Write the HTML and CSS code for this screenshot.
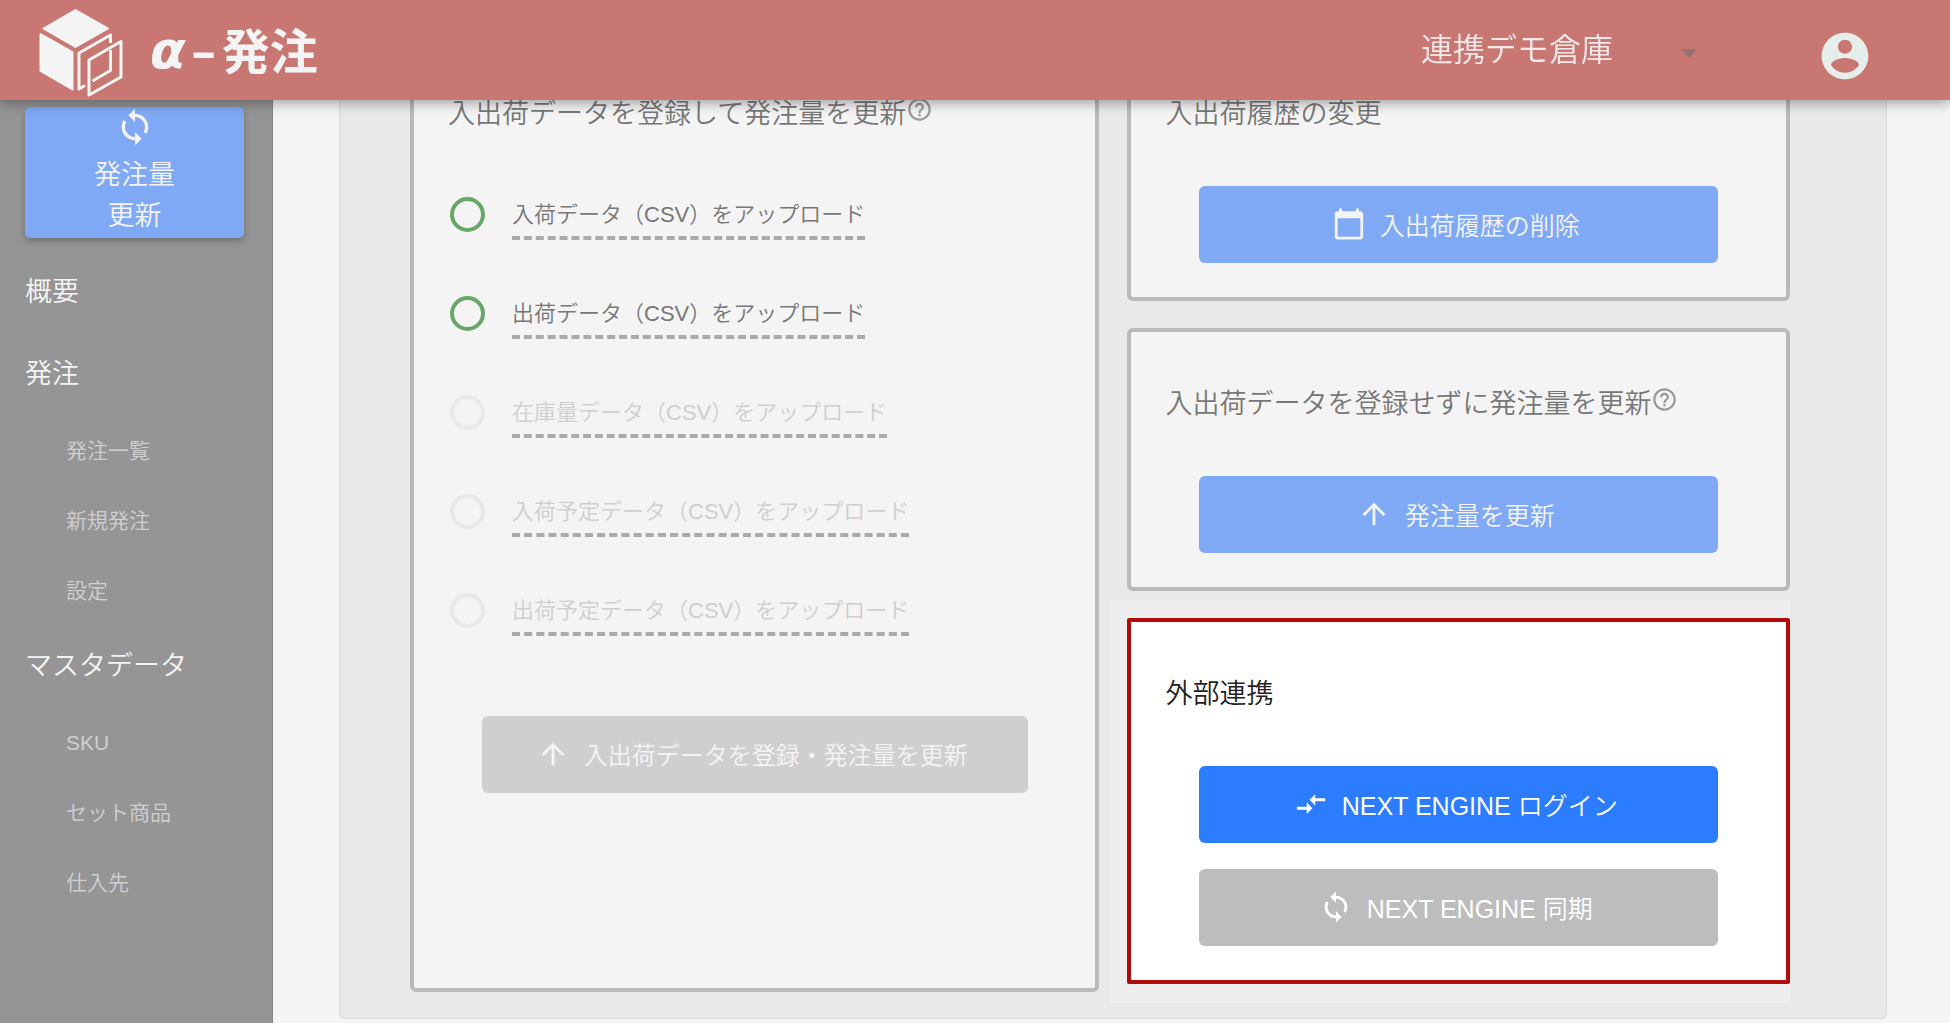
FILE: index.html
```
<!DOCTYPE html>
<html lang="ja">
<head>
    <meta charset="UTF-8">
    <meta name="viewport" content="width=device-width, initial-scale=1.0">
    <title>α-発注</title>
    <link rel="stylesheet" href="styles.css">
</head>
<body>
    <svg class="sprite" aria-hidden="true">
        <symbol id="icon-sync" viewBox="0 0 24 24"><path d="M12 4V1L8 5l4 4V6c3.31 0 6 2.69 6 6 0 1.01-.25 1.97-.7 2.8l1.46 1.46C19.54 15.03 20 13.57 20 12c0-4.42-3.58-8-8-8zm0 14c-3.31 0-6-2.69-6-6 0-1.01.25-1.97.7-2.8L5.24 7.74C4.46 8.97 4 10.43 4 12c0 4.42 3.58 8 8 8v3l4-4-4-4v3z"/></symbol>
        <symbol id="icon-arrow-up" viewBox="0 0 24 24"><path d="M4 12l1.41 1.41L11 7.83V20h2V7.83l5.58 5.59L20 12l-8-8-8 8z"/></symbol>
        <symbol id="icon-help" viewBox="0 0 24 24"><path d="M11 18h2v-2h-2v2zm1-16C6.48 2 2 6.48 2 12s4.48 10 10 10 10-4.48 10-10S17.52 2 12 2zm0 18c-4.41 0-8-3.59-8-8s3.59-8 8-8 8 3.59 8 8-3.59 8-8 8zm0-14c-2.21 0-4 1.79-4 4h2c0-1.1.9-2 2-2s2 .9 2 2c0 2-3 1.75-3 5h2c0-2.25 3-2.5 3-5 0-2.21-1.79-4-4-4z"/></symbol>
        <symbol id="icon-calendar" viewBox="0 0 24 24"><path d="M20 3h-1V1h-2v2H7V1H5v2H4c-1.1 0-2 .9-2 2v16c0 1.1.9 2 2 2h16c1.1 0 2-.9 2-2V5c0-1.1-.9-2-2-2zm0 18H4V8h16v13z"/></symbol>
        <symbol id="icon-compare" viewBox="0 0 24 24"><path d="M9.01 14H2v2h7.01v3L13 15l-3.99-4v3zm5.98-1v-3H22V8h-7.01V5L11 9l3.99 4z"/></symbol>
        <symbol id="icon-account" viewBox="0 0 24 24"><path d="M12 2C6.48 2 2 6.48 2 12s4.48 10 10 10 10-4.48 10-10S17.52 2 12 2zm0 3c1.66 0 3 1.34 3 3s-1.34 3-3 3-3-1.34-3-3 1.34-3 3-3zm0 14.2c-2.5 0-4.71-1.28-6-3.22.03-1.99 4-3.08 6-3.08 1.99 0 5.97 1.09 6 3.08-1.29 1.94-3.5 3.22-6 3.22z"/></symbol>
    </svg>

    <header class="header">
        <a class="brand" href="#">
            <svg class="brand-logo" viewBox="0 0 100 100" aria-hidden="true">
                <g fill="#f4f4f4" stroke="#f4f4f4" stroke-width="2" stroke-linejoin="round">
                    <path d="M45.500 10 L78 28.500 L45.500 47 L13.500 28.500 Z"/>
                    <path d="M10.500 34 L42.500 52 V89.500 L10.500 71 Z"/>
                </g>
                <g fill="none" stroke="#f4f4f4" stroke-width="3" stroke-linejoin="round">
                    <path d="M55 85.500 L49 89 V53 L80.500 35 V43"/>
                    <path d="M80.500 50 V70.500 L62.500 81"/>
                    <path d="M59 60 L91 41.500 V77 L59 95 Z"/>
                </g>
            </svg>
            <span class="brand-alpha">α</span>
            <span class="brand-dash">–</span>
            <span class="brand-name">発注</span>
        </a>
        <div class="warehouse">
            <select class="warehouse-select" aria-label="倉庫">
                <option>連携デモ倉庫</option>
            </select>
            <span class="warehouse-arrow"></span>
        </div>
        <button class="account" type="button" aria-label="アカウント">
            <svg class="account-icon"><use href="#icon-account"/></svg>
        </button>
    </header>

    <div class="layout">
        <aside class="sidebar">
            <button class="sidebar-update" type="button">
                <svg class="sidebar-icon"><use href="#icon-sync"/></svg>
                <span>発注量</span>
                <span>更新</span>
            </button>
            <nav class="nav">
                <a class="nav-item" href="#">概要</a>
                <a class="nav-item" href="#">発注</a>
                <a class="nav-sub" href="#">発注一覧</a>
                <a class="nav-sub" href="#">新規発注</a>
                <a class="nav-sub" href="#">設定</a>
                <a class="nav-item" href="#">マスタデータ</a>
                <a class="nav-sub" href="#">SKU</a>
                <a class="nav-sub" href="#">セット商品</a>
                <a class="nav-sub" href="#">仕入先</a>
            </nav>
        </aside>

        <main class="main">
            <div class="panel">
                <section class="card card-upload">
                    <h2 class="card-title">入出荷データを登録して発注量を更新<svg class="help"><use href="#icon-help"/></svg></h2>
                    <ul class="uploads">
                        <li class="upload"><span class="circle"></span><button class="upload-button" type="button">入荷データ（CSV）をアップロード</button></li>
                        <li class="upload"><span class="circle"></span><button class="upload-button" type="button">出荷データ（CSV）をアップロード</button></li>
                        <li class="upload waiting"><span class="circle"></span><button class="upload-button" type="button" disabled>在庫量データ（CSV）をアップロード</button></li>
                        <li class="upload waiting"><span class="circle"></span><button class="upload-button" type="button" disabled>入荷予定データ（CSV）をアップロード</button></li>
                        <li class="upload waiting"><span class="circle"></span><button class="upload-button" type="button" disabled>出荷予定データ（CSV）をアップロード</button></li>
                    </ul>
                    <button class="button button-submit" type="button" disabled>
                        <svg class="icon"><use href="#icon-arrow-up"/></svg>入出荷データを登録・発注量を更新
                    </button>
                </section>

                <div class="side-cards">
                    <section class="card">
                        <h2 class="card-title">入出荷履歴の変更</h2>
                        <div class="actions">
                            <button class="button" type="button"><svg class="icon"><use href="#icon-calendar"/></svg>入出荷履歴の削除</button>
                        </div>
                    </section>
                    <section class="card">
                        <h2 class="card-title">入出荷データを登録せずに発注量を更新<svg class="help"><use href="#icon-help"/></svg></h2>
                        <div class="actions">
                            <button class="button" type="button"><svg class="icon"><use href="#icon-arrow-up"/></svg>発注量を更新</button>
                        </div>
                    </section>
                    <section class="card card-active">
                        <h2 class="card-title">外部連携</h2>
                        <div class="actions">
                            <button class="button button-login" type="button"><svg class="icon"><use href="#icon-compare"/></svg>NEXT ENGINE ログイン</button>
                            <button class="button button-sync" type="button" disabled><svg class="icon"><use href="#icon-sync"/></svg>NEXT ENGINE 同期</button>
                        </div>
                    </section>
                </div>
            </div>
        </main>
    </div>
</body>
</html>
```

FILE: styles.css
```
* { margin: 0; padding: 0; box-sizing: border-box; }
body {
    font-family: 'Liberation Sans', 'Noto Sans CJK JP', sans-serif;
    font-weight: 350;
    background: #f4f4f4;
    color: #777;
    overflow: hidden;
}
button, select { font: inherit; border: none; background: none; }
a { color: inherit; text-decoration: none; }
svg { fill: currentColor; flex-shrink: 0; }
.sprite { display: none; }

/* header */
.header {
    position: fixed;
    top: 0;
    left: 0;
    right: 0;
    z-index: 10;
    height: 100px;
    padding: 0 77px 0 30px;
    display: flex;
    align-items: center;
    background: #c87772;
    color: #f4f4f4;
    box-shadow: 0 3px 12px rgba(0, 0, 0, 0.35);
}
.brand {
    display: flex;
    align-items: center;
    margin-right: auto;
    font-family: 'Noto Sans CJK JP', sans-serif;
    font-size: 48px;
    font-weight: 700;
    line-height: 96px;
}
.brand-logo { width: 100px; height: 100px; margin-right: 20px; }
.brand-alpha {
    font-family: 'DejaVu Sans', sans-serif;
    font-size: 52px;
    font-style: italic;
}
.brand-dash { font-family: 'Open Sans', sans-serif; margin: 0 6px; }
.brand-name { height: 100px; }
.warehouse {
    display: flex;
    align-items: center;
    width: 276px;
    margin-right: 120px;
}
.warehouse-select {
    appearance: none;
    flex: 1;
    height: 60px;
    color: #f4e9e8;
    font-size: 32px;
}
.warehouse-arrow {
    border: 8px solid transparent;
    border-top: 9px solid #947270;
    border-bottom: none;
    margin-top: 6px;
}
.account { height: 56px; margin-top: 12px; color: #e6eeec; }
.account-icon { display: block; width: 56px; height: 56px; }

/* sidebar */
.layout { display: flex; min-height: 100vh; }
.sidebar {
    flex: 0 0 273px;
    padding-top: 107px;
    background: #959595;
    border-right: 1px solid #858585;
    color: #f4f4f4;
}
.sidebar-update {
    display: flex;
    flex-direction: column;
    align-items: center;
    width: 219px;
    height: 131px;
    margin: 0 25px 13px;
    background: #7fa9f4;
    color: #f4f4f4;
    border-radius: 5px;
    font-size: 27px;
    line-height: 41px;
    box-shadow: 0 3px 6px rgba(0, 0, 0, 0.25);
}
.sidebar-icon { width: 40px; height: 40px; margin-bottom: 8px; }
.nav { display: flex; flex-direction: column; }
.nav-item { padding-left: 25px; font-size: 27px; line-height: 82px; }
.nav-sub {
    padding: 2px 0 0 66px;
    font-size: 21px;
    line-height: 68px;
    color: #d0d0d0;
}

/* content */
.main { flex: 1; padding: 0 63px 4px 66px; }
.panel {
    isolation: isolate;
    display: grid;
    grid-template-columns: 690fr 663fr;
    gap: 28px;
    padding: 38px 96px 26px 70px;
    background: #e9e9e9;
    border: 1px solid #dadada;
    border-top: none;
    border-radius: 0 0 6px 6px;
}
.side-cards {
    display: flex;
    flex-direction: column;
    gap: 27px;
    padding-bottom: 8px;
}
.card {
    position: relative;
    padding: 50px 34px 34px;
    background: #f4f4f4;
    border: 4px solid #b9b9b9;
    border-radius: 6px;
}
.card-title {
    display: flex;
    align-items: center;
    height: 38px;
    margin-bottom: 56px;
    font-size: 27px;
    font-weight: inherit;
    white-space: nowrap;
}
.help { width: 27px; height: 27px; margin-bottom: 4px; color: #999; }

.uploads { list-style: none; }
.upload { display: flex; align-items: flex-start; height: 99px; gap: 27px; }
.circle {
    width: 35px;
    height: 35px;
    margin: 11px 0 0 2px;
    border: 4px solid #67a868;
    border-radius: 50%;
}
.upload-button {
    padding-top: 8px;
    border-bottom: 4px dashed #aaa;
    color: #777;
    font-size: 22px;
    line-height: 42px;
    white-space: nowrap;
}
.waiting .circle { border-color: #e6ebe5; }
.waiting .upload-button { color: #cfcfcf; }

.actions {
    display: flex;
    flex-direction: column;
    gap: 26px;
    padding: 0 34px;
}
.button {
    display: flex;
    align-items: center;
    justify-content: center;
    gap: 14px;
    width: 100%;
    height: 77px;
    padding: 0 6px 2px 0;
    background: #7fa9f4;
    color: #f4f4f4;
    border-radius: 6px;
    font-size: 25px;
    white-space: nowrap;
}
.icon { width: 34px; height: 34px; }
.button-submit {
    width: 546px;
    margin: 35px auto 0;
    background: #cfcfcf;
    font-size: 24px;
}

.card-active { background: #fff; border-color: #b00c0c; border-radius: 2px; color: #222; }
.card-active::before {
    content: '';
    position: absolute;
    inset: -22px -4px -23px -22px;
    z-index: -1;
    background: #eee;
}
.button-login { background: #2b7cff; color: #fff; }
.button-sync { background: #bdbdbd; color: #fff; }
```
